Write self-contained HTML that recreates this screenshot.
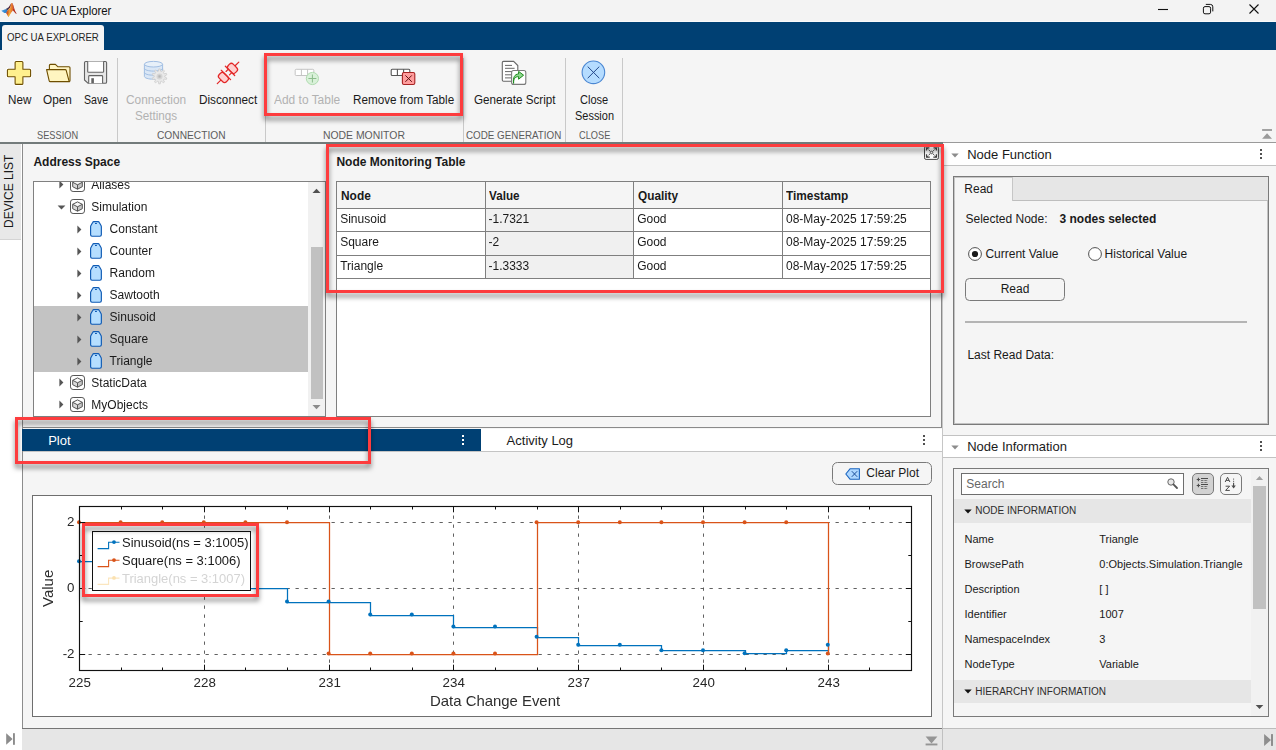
<!DOCTYPE html>
<html>
<head>
<meta charset="utf-8">
<title>OPC UA Explorer</title>
<style>
*{box-sizing:border-box;margin:0;padding:0}
html,body{width:1276px;height:750px;overflow:hidden;background:#f5f5f5;font-family:"Liberation Sans",sans-serif;font-size:12px;color:#1a1a1a}
#root{position:relative;width:1276px;height:750px;overflow:hidden;background:#f5f5f5}
.abs{position:absolute}
.t{position:absolute;white-space:nowrap}
.gl{will-change:transform;pointer-events:none}
svg{position:absolute;overflow:visible}
.redbox{position:absolute;border:3px solid #fd3c3e;filter:drop-shadow(0px 4px 2.5px rgba(0,0,0,.5))}
</style>
</head>
<body>
<div id="root">
<div class="abs" style="left:0px;top:0px;width:1276px;height:22px;background:#f3f3f3;"></div>
<div class="abs" style="left:0px;top:21px;width:1276px;height:1px;background:#fafafa;"></div>
<div class="abs" style="left:0px;top:22px;width:1276px;height:28px;background:#004073;"></div>
<div class="abs" style="left:2px;top:25px;width:102px;height:25px;background:#f5f5f5;border-radius:3px 3px 0 0;"></div>
<svg style="left:0;top:0" width="20" height="20" viewBox="0 0 20 20">
<defs><linearGradient id="lg1" x1="0" y1="0" x2="1" y2="0"><stop offset="0" stop-color="#b8341a"/><stop offset=".5" stop-color="#f3a23a"/><stop offset="1" stop-color="#dc5a20"/></linearGradient>
<linearGradient id="lg2" x1="0" y1="1" x2="1" y2="0"><stop offset="0" stop-color="#24558f"/><stop offset=".55" stop-color="#5a2c3c"/><stop offset="1" stop-color="#a02a1c"/></linearGradient>
<linearGradient id="lg3" x1="0" y1="0" x2="1" y2="0"><stop offset="0" stop-color="#4aa3e6"/><stop offset="1" stop-color="#2477c4"/></linearGradient></defs>
<path d="M1.3 10.7L5.4 9.3L7.6 10.3L6.3 13L4.3 13.1Z" fill="url(#lg3)"/>
<path d="M5.4 9.3L6.6 8.4L8.6 7.3L10.4 4.4L11.3 3.1L10.4 7.6L7.6 10.3Z" fill="url(#lg2)"/>
<path d="M11.3 3.1Q11.7 2.7 12.2 3.2L13.1 5.5L13.4 8.6L12.7 10.8L10.7 13.2L8.5 17L7.3 15L6.1 13.1L7.6 10.3L10.4 7.6Z" fill="url(#lg1)"/>
<path d="M11.9 2.9Q12.5 2.9 12.9 3.9L13.9 7.2L15.1 11L16.8 14.1L15.6 13.6L14.1 11.8L13 10.4L12.7 10.8L13.3 8.4L12.9 5Z" fill="#b22e1c"/>
<path d="M8.5 17L7.6 15.6L9.6 12.6L10.8 13Z" fill="#f2b233" opacity=".8"/>
</svg>
<div class="t" style="left:23.20px;top:2px;font-size:13px;line-height:18px;color:#111;transform:scaleX(0.8740);transform-origin:0 0;">OPC UA Explorer</div>
<svg style="left:1150px;top:0" width="126" height="22" viewBox="0 0 126 22" fill="none" stroke="#111" stroke-width="1.1">
<path d="M8 9.5H18"/>
<rect x="53.4" y="6.6" width="7.2" height="7.2" rx="1.6" stroke-width="1"/><path d="M55.8 4.4H60.4Q62.8 4.4 62.8 6.8V11.4" stroke-width="1"/>
<path d="M99.5 4.5L108.5 13.5M108.5 4.5L99.5 13.5"/>
</svg>
<div class="t" style="left:7.30px;top:30px;font-size:11px;line-height:15px;color:#242424;transform:scaleX(0.8782);transform-origin:0 0;">OPC UA EXPLORER</div>
<div class="abs" style="left:0px;top:50px;width:1276px;height:92px;background:#f5f5f5;"></div>
<div class="abs" style="left:0px;top:142px;width:1276px;height:1px;background:#8e8e8e;"></div>
<div class="abs" style="left:117px;top:58px;width:1px;height:84px;background:#c9c9c9;"></div>
<div class="abs" style="left:265px;top:58px;width:1px;height:84px;background:#c9c9c9;"></div>
<div class="abs" style="left:463px;top:58px;width:1px;height:84px;background:#c9c9c9;"></div>
<div class="abs" style="left:565px;top:58px;width:1px;height:84px;background:#c9c9c9;"></div>
<div class="abs" style="left:622px;top:58px;width:1px;height:84px;background:#c9c9c9;"></div>
<div class="t" style="left:7.60px;top:92px;font-size:12px;line-height:17px;color:#1a1a1a;transform:scaleX(0.9706);transform-origin:0 0;">New</div>
<div class="t" style="left:43.00px;top:92px;font-size:12px;line-height:17px;color:#1a1a1a;transform:scaleX(0.9811);transform-origin:0 0;">Open</div>
<div class="t" style="left:84.00px;top:92px;font-size:12px;line-height:17px;color:#1a1a1a;transform:scaleX(0.8848);transform-origin:0 0;">Save</div>
<div class="t" style="left:125.90px;top:92px;font-size:12px;line-height:17px;color:#b2b2b2;transform:scaleX(0.9916);transform-origin:0 0;">Connection</div>
<div class="t" style="left:135.00px;top:108px;font-size:12px;line-height:17px;color:#b2b2b2;transform:scaleX(0.9733);transform-origin:0 0;">Settings</div>
<div class="t" style="left:198.80px;top:92px;font-size:12px;line-height:17px;color:#1a1a1a;transform:scaleX(0.9804);transform-origin:0 0;">Disconnect</div>
<div class="t" style="left:274.00px;top:92px;font-size:12px;line-height:17px;color:#b2b2b2;transform:scaleX(0.9955);transform-origin:0 0;">Add to Table</div>
<div class="t" style="left:353.00px;top:92px;font-size:12px;line-height:17px;color:#1a1a1a;transform:scaleX(0.9747);transform-origin:0 0;">Remove from Table</div>
<div class="t" style="left:473.70px;top:92px;font-size:12px;line-height:17px;color:#1a1a1a;transform:scaleX(0.9698);transform-origin:0 0;">Generate Script</div>
<div class="t" style="left:579.90px;top:92px;font-size:12px;line-height:17px;color:#1a1a1a;transform:scaleX(0.9192);transform-origin:0 0;">Close</div>
<div class="t" style="left:574.50px;top:108px;font-size:12px;line-height:17px;color:#1a1a1a;transform:scaleX(0.9135);transform-origin:0 0;">Session</div>
<div class="t" style="left:37.10px;top:128px;font-size:11px;line-height:15px;color:#5c5c5c;transform:scaleX(0.8404);transform-origin:0 0;">SESSION</div>
<div class="t" style="left:156.70px;top:128px;font-size:11px;line-height:15px;color:#5c5c5c;transform:scaleX(0.9264);transform-origin:0 0;">CONNECTION</div>
<div class="t" style="left:323.10px;top:128px;font-size:11px;line-height:15px;color:#5c5c5c;transform:scaleX(0.9460);transform-origin:0 0;">NODE MONITOR</div>
<div class="t" style="left:466.30px;top:128px;font-size:11px;line-height:15px;color:#5c5c5c;transform:scaleX(0.8927);transform-origin:0 0;">CODE GENERATION</div>
<div class="t" style="left:578.50px;top:128px;font-size:11px;line-height:15px;color:#5c5c5c;transform:scaleX(0.8393);transform-origin:0 0;">CLOSE</div>
<svg style="left:1260px;top:127px" width="14" height="14" viewBox="0 0 14 14"><rect x="2.1" y="2.1" width="9.9" height="1.8" fill="#9a9a9a"/><path d="M7.05 6.2L12 11.7H2.1Z" fill="#9a9a9a"/></svg>
<svg style="left:0;top:50px" width="640" height="45" viewBox="0 50 640 45">
<g stroke-linejoin="round">
<path d="M16.1 61.5H21.9Q22.9 61.5 22.9 62.5V69.2H29.6Q30.6 69.2 30.6 70.2V75.7Q30.6 76.7 29.6 76.7H22.9V83.4Q22.9 84.4 21.9 84.4H16.1Q15.1 84.4 15.1 83.4V76.7H8.4Q7.4 76.7 7.4 75.7V70.2Q7.4 69.2 8.4 69.2H15.1V62.5Q15.1 61.5 16.1 61.5Z" fill="#fff08e" stroke="#ffffff" stroke-width="3" opacity=".9"/>
<path d="M16.1 61.5H21.9Q22.9 61.5 22.9 62.5V69.2H29.6Q30.6 69.2 30.6 70.2V75.7Q30.6 76.7 29.6 76.7H22.9V83.4Q22.9 84.4 21.9 84.4H16.1Q15.1 84.4 15.1 83.4V76.7H8.4Q7.4 76.7 7.4 75.7V70.2Q7.4 69.2 8.4 69.2H15.1V62.5Q15.1 61.5 16.1 61.5Z" fill="#fff08e" stroke="#6e4e00" stroke-width="1.1"/>
<!-- Open folder -->
<path d="M49.4 69.5V65.4Q49.4 64.4 50.4 64.4H55.4L58 66.8H69Q70 66.8 70 67.8V80.6Q70 81.6 69 81.6" fill="#fff5c4" stroke="#6e4e00" stroke-width="1.1"/>
<path d="M46.6 69.6H65.2Q66 69.6 66.2 70.4L69.2 81.6H50.2Q49.4 81.6 49.2 80.8Z" fill="#fff5c0" stroke="#6e4e00" stroke-width="1.1"/>
<!-- Save -->
<path d="M85.8 61.5H105.3Q106.6 61.5 106.6 62.8V82Q106.6 83.3 105.3 83.3H88.2L84.5 80V62.8Q84.5 61.5 85.8 61.5Z" fill="#e6e6e6" stroke="#636363" stroke-width="1.1"/>
<path d="M87.7 61.5V71.4Q87.7 72.2 88.5 72.2H102.8Q103.6 72.2 103.6 71.4V61.5" fill="#fff" stroke="#636363" stroke-width="1.1"/>
<path d="M88.7 83.3V76.4Q88.7 75.6 89.5 75.6H101.8Q102.6 75.6 102.6 76.4V83.3" fill="#fff" stroke="#636363" stroke-width="1.1"/>
<rect x="91.3" y="78.2" width="2.6" height="5" fill="#636363"/>
</g>
<!-- Connection settings (disabled) -->
<g opacity=".7">
<path d="M144.4 64.2V76.4C144.4 78 148.5 79.2 153.5 79.2C158.5 79.2 162.6 78 162.6 76.4V64.2" fill="#cfe2f7" stroke="#7fa8dc" stroke-width="1"/>
<path d="M144.4 68.3C144.4 69.9 148.5 71.1 153.5 71.1C158.5 71.1 162.6 69.9 162.6 68.3M144.4 72.4C144.4 74 148.5 75.2 153.5 75.2C158.5 75.2 162.6 74 162.6 72.4" fill="none" stroke="#7fa8dc" stroke-width="1"/>
<ellipse cx="153.5" cy="64.2" rx="9.1" ry="2.8" fill="#e2eefb" stroke="#7fa8dc" stroke-width="1"/>
</g>
<g transform="translate(159.5 76.4)">
<path d="M-1.06 -5.19L-0.75 -7.46L0.75 -7.46L1.06 -5.19L2.20 -4.82L3.78 -6.48L5.00 -5.59L3.91 -3.58L4.61 -2.61L6.86 -3.02L7.33 -1.59L5.27 -0.60L5.27 0.60L7.33 1.59L6.86 3.02L4.61 2.61L3.91 3.58L5.00 5.59L3.78 6.48L2.20 4.82L1.06 5.19L0.75 7.46L-0.75 7.46L-1.06 5.19L-2.20 4.82L-3.78 6.48L-5.00 5.59L-3.91 3.58L-4.61 2.61L-6.86 3.02L-7.33 1.59L-5.27 0.60L-5.27 -0.60L-7.33 -1.59L-6.86 -3.02L-4.61 -2.61L-3.91 -3.58L-5.00 -5.59L-3.78 -6.48L-2.20 -4.82Z" fill="#e9e9e9" stroke="#cdcdcd" stroke-width=".8" stroke-linejoin="round"/>
<circle r="3" fill="#d6d6d6"/><circle r="1.7" fill="#c4c4c4"/><circle r=".8" fill="#b6b6b6"/>
</g>
<!-- Disconnect plug -->
<g transform="translate(227.9 73) rotate(-45)" stroke="#e32828" stroke-width="1.25" fill="#ffd0d0" stroke-linecap="round">
<path d="M-15 0H-10M10.2 0H15.4M3 -2.4H-0.2M3 2.4H-0.2" fill="none"/>
<rect x="-9.8" y="-5.1" width="7" height="10.2" rx="2.6"/>
<rect x="3" y="-5.1" width="7" height="10.2" rx="2.6"/>
<path d="M-2.8 -6.6V6.6M3 -6.6V6.6" fill="none"/>
</g>
<!-- Add to table (disabled) -->
<g>
<rect x="295.2" y="69.3" width="18.6" height="6.2" rx="1" fill="#fff" stroke="#c4c4c4" stroke-width="1"/>
<path d="M301.4 69.3V75.5M307.6 69.3V75.5" stroke="#c4c4c4" stroke-width="1"/>
<circle cx="312.4" cy="78.5" r="6.1" fill="#d9f1d9" stroke="#b0dcb0" stroke-width="1"/>
<path d="M308.4 78.5H316.4M312.4 74.5V82.5" stroke="#8cbc8c" stroke-width="1"/>
</g>
<!-- Remove from table -->
<g>
<rect x="391.2" y="69.3" width="18.6" height="6.2" rx="1" fill="#fff" stroke="#555" stroke-width="1.1"/>
<path d="M397.4 69.3V75.5M403.6 69.3V75.5" stroke="#555" stroke-width="1.1"/>
<rect x="402.4" y="72.5" width="12.4" height="12" rx="1.6" fill="#ff9c9c" stroke="#a52222" stroke-width="1.1"/>
<path d="M405.4 75.4L411.8 81.8M411.8 75.4L405.4 81.8" stroke="#5e1212" stroke-width="1"/>
</g>
<!-- Generate script -->
<g>
<path d="M503.5 61.4H513.6L517.8 65.6V80Q517.8 81.2 516.6 81.2H503.5Q502.3 81.2 502.3 80V62.6Q502.3 61.4 503.5 61.4Z" fill="#fff" stroke="#686868" stroke-width="1.1"/>
<path d="M505 65.4H512M505 68.3H514.6M505 71.6H514.6M505 74.8H511M505 77.9H511" stroke="#686868" stroke-width="1"/>
<rect x="511.6" y="70.5" width="14.2" height="13.9" rx="2" fill="#fff" stroke="#7a7a7a" stroke-width="1.1"/>
<path d="M513.6 83.4C513.4 79 515 76.6 518.6 76.6V79.2L523.6 75.2L518.6 71.4V74C514.6 74 512.8 77.6 513.6 83.4Z" fill="#8fd88f" stroke="#1c8a1c" stroke-width="1" stroke-linejoin="round"/>
</g>
<!-- Close session -->
<circle cx="593.4" cy="72.3" r="11.3" fill="#b5dcff" stroke="#4b87d2" stroke-width="1.1"/>
<path d="M587.7 66.6L599.3 78.2M599.3 66.6L587.7 78.2" stroke="#23488a" stroke-width="1"/>
</svg>
<div class="abs" style="left:0px;top:143px;width:22px;height:584px;background:#ffffff;"></div>
<div class="abs" style="left:0px;top:143px;width:21px;height:96px;background:#e8e8e8;"></div>
<div class="abs" style="left:0px;top:239px;width:21px;height:1px;background:#d4d4d4;"></div>
<div class="abs" style="left:22px;top:143px;width:1px;height:585px;background:#8c8c8c;"></div>
<div class="t" style="left:2.2px;top:228px;font-size:12px;line-height:14px;color:#1a1a1a;transform:rotate(-90deg);transform-origin:0 0;">DEVICE LIST</div>
<div class="abs" style="left:23px;top:143px;width:305px;height:285px;background:#f5f5f5;"></div>
<div class="t" style="left:33.40px;top:154px;font-size:12px;line-height:17px;color:#1a1a1a;font-weight:bold;">Address Space</div>
<div class="abs" style="left:33px;top:181px;width:293px;height:236px;background:#fff;border:1px solid #808080;"></div>
<div class="abs" style="left:34px;top:306px;width:274px;height:66px;background:#c3c3c3;"></div>
<div class="abs" style="left:308px;top:182px;width:17px;height:234px;background:#f1f1f1;"></div>
<div class="abs" style="left:310.5px;top:247px;width:12.5px;height:152px;background:#c1c1c1;"></div>
<svg style="left:312px;top:188px" width="9" height="6" viewBox="0 0 9 6"><path d="M0.5 5L4.5 0.8L8.5 5Z" fill="#505050"/></svg>
<svg style="left:312px;top:404px" width="9" height="6" viewBox="0 0 9 6"><path d="M0.5 1L4.5 5.2L8.5 1Z" fill="#8a8a8a"/></svg>
<div class="abs gl" style="left:34px;top:182px;width:274px;height:234px;overflow:hidden">
<svg style="left:25.299999999999997px;top:-2.2px" width="5" height="9" viewBox="0 0 5 9"><path d="M0.4 0.6L4.4 4.5L0.4 8.4Z" fill="#555"/></svg>
<svg style="left:36px;top:-5.2px" width="15" height="15" viewBox="0 0 15 15"><rect x=".5" y=".5" width="14" height="14" rx="2.6" fill="#fff" stroke="#555" stroke-width="1"/><path d="M7.5 2.9L12.3 5.3L7.5 7.8L2.7 5.3Z" fill="#f8f8f8"/><path d="M2.7 5.3L7.5 7.8V12.2L2.7 9.7Z" fill="#dadada"/><path d="M12.3 5.3L7.5 7.8V12.2L12.3 9.7Z" fill="#c6c6c6"/><path d="M7.5 2.9L12.3 5.3V9.7L7.5 12.2L2.7 9.7V5.3ZM2.7 5.3L7.5 7.8L12.3 5.3M7.5 7.8V12.2" fill="none" stroke="#555" stroke-width="1" stroke-linejoin="round"/></svg>
<div class="t" style="left:57.30px;top:-5px;font-size:12px;line-height:17px;color:#1a1a1a;">Aliases</div>
<svg style="left:23.299999999999997px;top:22.9px" width="9" height="5" viewBox="0 0 9 5"><path d="M0.6 0.4H8.4L4.5 4.6Z" fill="#555"/></svg>
<svg style="left:36px;top:17.0px" width="15" height="15" viewBox="0 0 15 15"><rect x=".5" y=".5" width="14" height="14" rx="2.6" fill="#fff" stroke="#555" stroke-width="1"/><path d="M7.5 2.9L12.3 5.3L7.5 7.8L2.7 5.3Z" fill="#f8f8f8"/><path d="M2.7 5.3L7.5 7.8V12.2L2.7 9.7Z" fill="#dadada"/><path d="M12.3 5.3L7.5 7.8V12.2L12.3 9.7Z" fill="#c6c6c6"/><path d="M7.5 2.9L12.3 5.3V9.7L7.5 12.2L2.7 9.7V5.3ZM2.7 5.3L7.5 7.8L12.3 5.3M7.5 7.8V12.2" fill="none" stroke="#555" stroke-width="1" stroke-linejoin="round"/></svg>
<div class="t" style="left:57.30px;top:17px;font-size:12px;line-height:17px;color:#1a1a1a;">Simulation</div>
<svg style="left:43.2px;top:42.5px" width="5" height="9" viewBox="0 0 5 9"><path d="M0.4 0.6L4.4 4.5L0.4 8.4Z" fill="#555"/></svg>
<svg style="left:56px;top:39.0px" width="13" height="16" viewBox="0 0 13 16"><path d="M2 15.2H9.95Q11.35 15.2 11.35 13.8V6.1Q11.35 5.3 11 4.6L9.3 1.4Q8.9 0.6 8.1 0.6H3.85Q3.05 0.6 2.65 1.4L0.95 4.6Q0.6 5.3 0.6 6.1V13.8Q0.6 15.2 2 15.2Z" fill="#b5deff" stroke="#0f5ab4" stroke-width="1.15" stroke-linejoin="round"/><path d="M5 2.5H6.9" stroke="#0f5ab4" stroke-width="1.1"/></svg>
<div class="t" style="left:75.60px;top:39px;font-size:12px;line-height:17px;color:#1a1a1a;">Constant</div>
<svg style="left:43.2px;top:64.5px" width="5" height="9" viewBox="0 0 5 9"><path d="M0.4 0.6L4.4 4.5L0.4 8.4Z" fill="#555"/></svg>
<svg style="left:56px;top:61.0px" width="13" height="16" viewBox="0 0 13 16"><path d="M2 15.2H9.95Q11.35 15.2 11.35 13.8V6.1Q11.35 5.3 11 4.6L9.3 1.4Q8.9 0.6 8.1 0.6H3.85Q3.05 0.6 2.65 1.4L0.95 4.6Q0.6 5.3 0.6 6.1V13.8Q0.6 15.2 2 15.2Z" fill="#b5deff" stroke="#0f5ab4" stroke-width="1.15" stroke-linejoin="round"/><path d="M5 2.5H6.9" stroke="#0f5ab4" stroke-width="1.1"/></svg>
<div class="t" style="left:75.60px;top:61px;font-size:12px;line-height:17px;color:#1a1a1a;">Counter</div>
<svg style="left:43.2px;top:86.5px" width="5" height="9" viewBox="0 0 5 9"><path d="M0.4 0.6L4.4 4.5L0.4 8.4Z" fill="#555"/></svg>
<svg style="left:56px;top:83.0px" width="13" height="16" viewBox="0 0 13 16"><path d="M2 15.2H9.95Q11.35 15.2 11.35 13.8V6.1Q11.35 5.3 11 4.6L9.3 1.4Q8.9 0.6 8.1 0.6H3.85Q3.05 0.6 2.65 1.4L0.95 4.6Q0.6 5.3 0.6 6.1V13.8Q0.6 15.2 2 15.2Z" fill="#b5deff" stroke="#0f5ab4" stroke-width="1.15" stroke-linejoin="round"/><path d="M5 2.5H6.9" stroke="#0f5ab4" stroke-width="1.1"/></svg>
<div class="t" style="left:75.60px;top:83px;font-size:12px;line-height:17px;color:#1a1a1a;">Random</div>
<svg style="left:43.2px;top:108.5px" width="5" height="9" viewBox="0 0 5 9"><path d="M0.4 0.6L4.4 4.5L0.4 8.4Z" fill="#555"/></svg>
<svg style="left:56px;top:105.0px" width="13" height="16" viewBox="0 0 13 16"><path d="M2 15.2H9.95Q11.35 15.2 11.35 13.8V6.1Q11.35 5.3 11 4.6L9.3 1.4Q8.9 0.6 8.1 0.6H3.85Q3.05 0.6 2.65 1.4L0.95 4.6Q0.6 5.3 0.6 6.1V13.8Q0.6 15.2 2 15.2Z" fill="#b5deff" stroke="#0f5ab4" stroke-width="1.15" stroke-linejoin="round"/><path d="M5 2.5H6.9" stroke="#0f5ab4" stroke-width="1.1"/></svg>
<div class="t" style="left:75.60px;top:105px;font-size:12px;line-height:17px;color:#1a1a1a;">Sawtooth</div>
<svg style="left:43.2px;top:130.5px" width="5" height="9" viewBox="0 0 5 9"><path d="M0.4 0.6L4.4 4.5L0.4 8.4Z" fill="#555"/></svg>
<svg style="left:56px;top:127.0px" width="13" height="16" viewBox="0 0 13 16"><path d="M2 15.2H9.95Q11.35 15.2 11.35 13.8V6.1Q11.35 5.3 11 4.6L9.3 1.4Q8.9 0.6 8.1 0.6H3.85Q3.05 0.6 2.65 1.4L0.95 4.6Q0.6 5.3 0.6 6.1V13.8Q0.6 15.2 2 15.2Z" fill="#b5deff" stroke="#0f5ab4" stroke-width="1.15" stroke-linejoin="round"/><path d="M5 2.5H6.9" stroke="#0f5ab4" stroke-width="1.1"/></svg>
<div class="t" style="left:75.60px;top:127px;font-size:12px;line-height:17px;color:#1a1a1a;">Sinusoid</div>
<svg style="left:43.2px;top:152.5px" width="5" height="9" viewBox="0 0 5 9"><path d="M0.4 0.6L4.4 4.5L0.4 8.4Z" fill="#555"/></svg>
<svg style="left:56px;top:149.0px" width="13" height="16" viewBox="0 0 13 16"><path d="M2 15.2H9.95Q11.35 15.2 11.35 13.8V6.1Q11.35 5.3 11 4.6L9.3 1.4Q8.9 0.6 8.1 0.6H3.85Q3.05 0.6 2.65 1.4L0.95 4.6Q0.6 5.3 0.6 6.1V13.8Q0.6 15.2 2 15.2Z" fill="#b5deff" stroke="#0f5ab4" stroke-width="1.15" stroke-linejoin="round"/><path d="M5 2.5H6.9" stroke="#0f5ab4" stroke-width="1.1"/></svg>
<div class="t" style="left:75.60px;top:149px;font-size:12px;line-height:17px;color:#1a1a1a;">Square</div>
<svg style="left:43.2px;top:174.5px" width="5" height="9" viewBox="0 0 5 9"><path d="M0.4 0.6L4.4 4.5L0.4 8.4Z" fill="#555"/></svg>
<svg style="left:56px;top:171.0px" width="13" height="16" viewBox="0 0 13 16"><path d="M2 15.2H9.95Q11.35 15.2 11.35 13.8V6.1Q11.35 5.3 11 4.6L9.3 1.4Q8.9 0.6 8.1 0.6H3.85Q3.05 0.6 2.65 1.4L0.95 4.6Q0.6 5.3 0.6 6.1V13.8Q0.6 15.2 2 15.2Z" fill="#b5deff" stroke="#0f5ab4" stroke-width="1.15" stroke-linejoin="round"/><path d="M5 2.5H6.9" stroke="#0f5ab4" stroke-width="1.1"/></svg>
<div class="t" style="left:75.60px;top:171px;font-size:12px;line-height:17px;color:#1a1a1a;">Triangle</div>
<svg style="left:25.299999999999997px;top:196.0px" width="5" height="9" viewBox="0 0 5 9"><path d="M0.4 0.6L4.4 4.5L0.4 8.4Z" fill="#555"/></svg>
<svg style="left:36px;top:193.0px" width="15" height="15" viewBox="0 0 15 15"><rect x=".5" y=".5" width="14" height="14" rx="2.6" fill="#fff" stroke="#555" stroke-width="1"/><path d="M7.5 2.9L12.3 5.3L7.5 7.8L2.7 5.3Z" fill="#f8f8f8"/><path d="M2.7 5.3L7.5 7.8V12.2L2.7 9.7Z" fill="#dadada"/><path d="M12.3 5.3L7.5 7.8V12.2L12.3 9.7Z" fill="#c6c6c6"/><path d="M7.5 2.9L12.3 5.3V9.7L7.5 12.2L2.7 9.7V5.3ZM2.7 5.3L7.5 7.8L12.3 5.3M7.5 7.8V12.2" fill="none" stroke="#555" stroke-width="1" stroke-linejoin="round"/></svg>
<div class="t" style="left:57.30px;top:193px;font-size:12px;line-height:17px;color:#1a1a1a;">StaticData</div>
<svg style="left:25.299999999999997px;top:218.0px" width="5" height="9" viewBox="0 0 5 9"><path d="M0.4 0.6L4.4 4.5L0.4 8.4Z" fill="#555"/></svg>
<svg style="left:36px;top:215.0px" width="15" height="15" viewBox="0 0 15 15"><rect x=".5" y=".5" width="14" height="14" rx="2.6" fill="#fff" stroke="#555" stroke-width="1"/><path d="M7.5 2.9L12.3 5.3L7.5 7.8L2.7 5.3Z" fill="#f8f8f8"/><path d="M2.7 5.3L7.5 7.8V12.2L2.7 9.7Z" fill="#dadada"/><path d="M12.3 5.3L7.5 7.8V12.2L12.3 9.7Z" fill="#c6c6c6"/><path d="M7.5 2.9L12.3 5.3V9.7L7.5 12.2L2.7 9.7V5.3ZM2.7 5.3L7.5 7.8L12.3 5.3M7.5 7.8V12.2" fill="none" stroke="#555" stroke-width="1" stroke-linejoin="round"/></svg>
<div class="t" style="left:57.30px;top:215px;font-size:12px;line-height:17px;color:#1a1a1a;">MyObjects</div>
</div>
<div class="abs" style="left:328px;top:143px;width:614px;height:285px;background:#f5f5f5;"></div>
<div class="t" style="left:336.40px;top:154px;font-size:12px;line-height:17px;color:#1a1a1a;font-weight:bold;">Node Monitoring Table</div>
<div class="abs" style="left:336px;top:181px;width:595px;height:236px;background:#fff;border:1px solid #7f7f7f;"></div>
<div class="abs" style="left:337px;top:182px;width:593px;height:26px;background:#f5f5f5;"></div>
<div class="abs" style="left:485px;top:208px;width:148px;height:70px;background:#f0f0f0;"></div>
<div class="abs" style="left:337px;top:208px;width:593px;height:1px;background:#7f7f7f;"></div>
<div class="abs" style="left:337px;top:231.3px;width:593px;height:1px;background:#7f7f7f;"></div>
<div class="abs" style="left:337px;top:254.8px;width:593px;height:1px;background:#7f7f7f;"></div>
<div class="abs" style="left:337px;top:278px;width:593px;height:1px;background:#7f7f7f;"></div>
<div class="abs" style="left:484.5px;top:182px;width:1px;height:97px;background:#7f7f7f;"></div>
<div class="abs" style="left:633px;top:182px;width:1px;height:97px;background:#7f7f7f;"></div>
<div class="abs" style="left:781.5px;top:182px;width:1px;height:97px;background:#7f7f7f;"></div>
<div class="t" style="left:340.70px;top:188px;font-size:12px;line-height:17px;color:#1a1a1a;font-weight:bold;transform:scaleX(0.9933);transform-origin:0 0;">Node</div>
<div class="t" style="left:488.60px;top:188px;font-size:12px;line-height:17px;color:#1a1a1a;font-weight:bold;transform:scaleX(0.9728);transform-origin:0 0;">Value</div>
<div class="t" style="left:637.60px;top:188px;font-size:12px;line-height:17px;color:#1a1a1a;font-weight:bold;transform:scaleX(0.9858);transform-origin:0 0;">Quality</div>
<div class="t" style="left:786.00px;top:188px;font-size:12px;line-height:17px;color:#1a1a1a;font-weight:bold;transform:scaleX(0.9868);transform-origin:0 0;">Timestamp</div>
<div class="abs gl" style="left:0;top:0;width:1276px;height:750px">
<div class="t" style="left:340.20px;top:211px;font-size:12px;line-height:17px;color:#1a1a1a;">Sinusoid</div>
<div class="t" style="left:488.50px;top:211px;font-size:12px;line-height:17px;color:#1a1a1a;">-1.7321</div>
<div class="t" style="left:637.20px;top:211px;font-size:12px;line-height:17px;color:#1a1a1a;">Good</div>
<div class="t" style="left:786.00px;top:211px;font-size:12px;line-height:17px;color:#1a1a1a;">08-May-2025 17:59:25</div>
<div class="t" style="left:340.20px;top:234px;font-size:12px;line-height:17px;color:#1a1a1a;">Square</div>
<div class="t" style="left:488.50px;top:234px;font-size:12px;line-height:17px;color:#1a1a1a;">-2</div>
<div class="t" style="left:637.20px;top:234px;font-size:12px;line-height:17px;color:#1a1a1a;">Good</div>
<div class="t" style="left:786.00px;top:234px;font-size:12px;line-height:17px;color:#1a1a1a;">08-May-2025 17:59:25</div>
<div class="t" style="left:340.20px;top:258px;font-size:12px;line-height:17px;color:#1a1a1a;">Triangle</div>
<div class="t" style="left:488.50px;top:258px;font-size:12px;line-height:17px;color:#1a1a1a;">-1.3333</div>
<div class="t" style="left:637.20px;top:258px;font-size:12px;line-height:17px;color:#1a1a1a;">Good</div>
<div class="t" style="left:786.00px;top:258px;font-size:12px;line-height:17px;color:#1a1a1a;">08-May-2025 17:59:25</div>
</div>
<svg style="left:924px;top:146px" width="15" height="14" viewBox="0 0 15 14"><rect x=".5" y=".5" width="13.9" height="12.9" rx="1.6" fill="#fff" stroke="#484848" stroke-width="1"/><path d="M2.5 4.6V1.9H5.4M2.5 8.3V11.2H5.8M9.3 11.2H12.4V8.3M9.5 1.9H12.4V4.6" fill="none" stroke="#444" stroke-width="1.25"/><path d="M2.5 3.6V1.9H4.4ZM2.5 9.4V11.2H4.6ZM10.4 11.2H12.4V9.4ZM10.6 1.9H12.4V3.6Z" fill="#444"/><path d="M3.4 2.8L6.5 5.5M11.5 2.8L8.5 5.5M3.4 10.3L6.5 7.4M11.5 10.3L8.5 7.4" stroke="#444" stroke-width="1" stroke-dasharray="1.4 .8"/><circle cx="7.5" cy="6.45" r="1.25" fill="#fff" stroke="#484848" stroke-width=".9"/></svg>
<div class="abs" style="left:23px;top:427px;width:919px;height:1px;background:#8a8a8a;"></div>
<div class="abs" style="left:942px;top:143px;width:1px;height:585px;background:#c6c6c6;"></div>
<div class="abs" style="left:941px;top:143px;width:1px;height:285px;background:#8a8a8a;"></div>
<div class="abs" style="left:943px;top:143px;width:333px;height:585px;background:#f5f5f5;"></div>
<div class="abs" style="left:943px;top:143px;width:333px;height:22px;background:#fff;"></div>
<div class="abs" style="left:943px;top:165px;width:333px;height:1px;background:#c2c2c2;"></div>
<svg style="left:951px;top:152.6px" width="8" height="5" viewBox="0 0 8 5"><path d="M0.3 0.4H7.7L4 4.6Z" fill="#8c8c8c"/></svg>
<div class="t" style="left:967.20px;top:146px;font-size:13px;line-height:18px;color:#1a1a1a;">Node Function</div>
<svg style="left:1260px;top:149px" width="2" height="10" viewBox="0 0 2 10" shape-rendering="crispEdges"><rect x="0" y="0" width="2" height="2" fill="#505050"/><rect x="0" y="4" width="2" height="2" fill="#505050"/><rect x="0" y="8" width="2" height="2" fill="#505050"/></svg>
<div class="abs" style="left:953px;top:176px;width:316px;height:249px;background:#f5f5f5;border:1px solid #7a7a7a;box-shadow:inset 0 0 0 1px #c2c2c2;"></div>
<div class="abs" style="left:954px;top:177px;width:313.5px;height:23px;background:#e6e6e6;"></div>
<div class="abs" style="left:954px;top:200px;width:313.5px;height:1px;background:#bebebe;"></div>
<div class="abs" style="left:954px;top:177px;width:58.5px;height:24px;background:#f5f5f5;border:1px solid #c6c6c6;border-bottom:none;"></div>
<div class="t" style="left:964.30px;top:181px;font-size:12px;line-height:17px;color:#1a1a1a;">Read</div>
<div class="t" style="left:965.50px;top:211px;font-size:12px;line-height:17px;color:#1a1a1a;">Selected Node:</div>
<div class="t" style="left:1059.50px;top:211px;font-size:12px;line-height:17px;color:#1a1a1a;font-weight:bold;">3 nodes selected</div>
<svg style="left:968px;top:247px" width="14" height="14" viewBox="0 0 14 14"><circle cx="7" cy="7" r="6.4" fill="#fff" stroke="#505050" stroke-width="1"/><circle cx="7" cy="7" r="3.1" fill="#1a1a1a"/></svg>
<svg style="left:1087.7px;top:247px" width="14" height="14" viewBox="0 0 14 14"><circle cx="7" cy="7" r="6.4" fill="#fff" stroke="#505050" stroke-width="1"/></svg>
<div class="t" style="left:985.40px;top:246px;font-size:12px;line-height:17px;color:#1a1a1a;">Current Value</div>
<div class="t" style="left:1104.60px;top:246px;font-size:12px;line-height:17px;color:#1a1a1a;">Historical Value</div>
<div class="abs" style="left:965px;top:278px;width:100px;height:22.5px;background:#f5f5f5;border:1px solid #7a7a7a;border-radius:4.5px;"></div>
<div class="t" style="left:1000.66px;top:281px;font-size:12px;line-height:17px;color:#1a1a1a;">Read</div>
<div class="abs" style="left:965px;top:321px;width:282px;height:1.5px;background:#b4b4b4;"></div>
<div class="t" style="left:967.40px;top:347px;font-size:12px;line-height:17px;color:#1a1a1a;">Last Read Data:</div>
<div class="abs" style="left:943px;top:435px;width:333px;height:1px;background:#c2c2c2;"></div>
<div class="abs" style="left:943px;top:436px;width:333px;height:21px;background:#fff;"></div>
<div class="abs" style="left:943px;top:457px;width:333px;height:1px;background:#c2c2c2;"></div>
<svg style="left:951px;top:444.6px" width="8" height="5" viewBox="0 0 8 5"><path d="M0.3 0.4H7.7L4 4.6Z" fill="#8c8c8c"/></svg>
<div class="t" style="left:967.20px;top:438px;font-size:13px;line-height:18px;color:#1a1a1a;">Node Information</div>
<svg style="left:1260px;top:441px" width="2" height="10" viewBox="0 0 2 10" shape-rendering="crispEdges"><rect x="0" y="0" width="2" height="2" fill="#505050"/><rect x="0" y="4" width="2" height="2" fill="#505050"/><rect x="0" y="8" width="2" height="2" fill="#505050"/></svg>
<div class="abs" style="left:953px;top:468px;width:316px;height:249px;background:#f5f5f5;border:1px solid #7a7a7a;"></div>
<div class="abs" style="left:961px;top:473px;width:222.5px;height:22px;background:#fff;border:1px solid #6e6e6e;"></div>
<div class="t" style="left:966.30px;top:476px;font-size:12px;line-height:17px;color:#666;">Search</div>
<svg style="left:1166px;top:477px" width="13" height="13" viewBox="0 0 13 13"><circle cx="5" cy="5" r="3.2" fill="#e8e8e8" stroke="#6a6a6a" stroke-width="1"/><path d="M7.4 7.4L11 11" stroke="#555" stroke-width="1.8" stroke-linecap="round"/></svg>
<div class="abs" style="left:1192px;top:473px;width:22px;height:22px;background:#d2d2d2;border:1px solid #7a7a7a;border-radius:5px;"></div>
<div class="abs" style="left:1220px;top:473px;width:22px;height:22px;background:#f5f5f5;border:1px solid #7a7a7a;border-radius:5px;"></div>
<svg style="left:1192px;top:473px" width="22" height="22" viewBox="0 0 22 22" stroke="#4a4a4a" stroke-width="1" fill="none"><path d="M9 5.5H16M9 11.5H16"/><path d="M9 7.5H16M9 9.5H16M9 13.5H16M9 15.5H16" stroke-dasharray="2.4 1" stroke="#6a6a6a" stroke-width=".9"/><path d="M6.4 4.8V8.2M4.7 6.5H8.1M6.4 10.8V14.2M4.7 12.5H8.1" stroke-width="1.1"/></svg>
<svg style="left:1220px;top:473px" width="22" height="22" viewBox="0 0 22 22" stroke="#4a4a4a" stroke-width="1" fill="none"><path d="M5.2 9L7.55 4.3L9.9 9M6.1 7.4H9" stroke-width="1"/><path d="M5.6 13.2H9.6L5.6 17.4H9.8" stroke-width="1"/><path d="M13.6 5.6V6.6M13.6 7.8V8.8" stroke-width="1"/><path d="M13.6 9.8V14.4" stroke-width="1.1"/><path d="M11.4 12.4H15.8L13.6 15.4Z" fill="#4a4a4a" stroke="none"/></svg>
<div class="abs" style="left:1251px;top:469px;width:17px;height:247px;background:#f1f1f1;"></div>
<div class="abs" style="left:1253px;top:486.2px;width:12.8px;height:122.8px;background:#c1c1c1;"></div>
<svg style="left:1255px;top:475px" width="9" height="6" viewBox="0 0 9 6"><path d="M0.9 5L4.5 1L8.1 5Z" fill="#a0a0a0"/></svg>
<svg style="left:1255px;top:704px" width="9" height="6" viewBox="0 0 9 6"><path d="M0.7 1L4.5 5.1L8.3 1Z" fill="#505050"/></svg>
<div class="abs" style="left:954px;top:499.2px;width:297px;height:23.5px;background:#e6e6e6;"></div>
<svg style="left:963.6px;top:508.5px" width="8" height="5" viewBox="0 0 8 5"><path d="M0.3 0.4H7.7L4 4.6Z" fill="#111"/></svg>
<div class="t" style="left:975.30px;top:504px;font-size:10px;line-height:14px;color:#2c2c2c;">NODE INFORMATION</div>
<div class="abs" style="left:954px;top:680.3px;width:297px;height:23.2px;background:#e6e6e6;"></div>
<svg style="left:963.6px;top:689px" width="8" height="5" viewBox="0 0 8 5"><path d="M0.3 0.4H7.7L4 4.6Z" fill="#111"/></svg>
<div class="t" style="left:975.30px;top:685px;font-size:10px;line-height:14px;color:#2c2c2c;">HIERARCHY INFORMATION</div>
<div class="t" style="left:964.50px;top:532px;font-size:11px;line-height:15px;color:#1a1a1a;">Name</div>
<div class="t" style="left:1099.30px;top:532px;font-size:11px;line-height:15px;color:#1a1a1a;">Triangle</div>
<div class="t" style="left:964.50px;top:557px;font-size:11px;line-height:15px;color:#1a1a1a;">BrowsePath</div>
<div class="t" style="left:1099.30px;top:557px;font-size:11px;line-height:15px;color:#1a1a1a;">0:Objects.Simulation.Triangle</div>
<div class="t" style="left:964.50px;top:582px;font-size:11px;line-height:15px;color:#1a1a1a;">Description</div>
<div class="t" style="left:1099.30px;top:582px;font-size:11px;line-height:15px;color:#1a1a1a;">[ ]</div>
<div class="t" style="left:964.50px;top:607px;font-size:11px;line-height:15px;color:#1a1a1a;">Identifier</div>
<div class="t" style="left:1099.30px;top:607px;font-size:11px;line-height:15px;color:#1a1a1a;">1007</div>
<div class="t" style="left:964.50px;top:632px;font-size:11px;line-height:15px;color:#1a1a1a;">NamespaceIndex</div>
<div class="t" style="left:1099.30px;top:632px;font-size:11px;line-height:15px;color:#1a1a1a;">3</div>
<div class="t" style="left:964.50px;top:657px;font-size:11px;line-height:15px;color:#1a1a1a;">NodeType</div>
<div class="t" style="left:1099.30px;top:657px;font-size:11px;line-height:15px;color:#1a1a1a;">Variable</div>
<div class="abs" style="left:0px;top:727px;width:22px;height:23px;background:#fff;"></div>
<div class="abs" style="left:22px;top:728px;width:1254px;height:22px;background:#e6e6e6;"></div>
<div class="abs" style="left:22px;top:728px;width:921px;height:1px;background:#767676;"></div>
<div class="abs" style="left:943px;top:728px;width:333px;height:1px;background:#bcbcbc;"></div>
<div class="abs" style="left:942px;top:728px;width:1px;height:22px;background:#c0c0c0;"></div>
<svg style="left:6px;top:733px" width="10" height="12" viewBox="0 0 10 12"><path d="M0.2 0.2L6.6 6L0.2 11.8Z" fill="#8c8c8c"/><rect x="7" y="0.2" width="1.9" height="11.6" fill="#8c8c8c"/></svg>
<svg style="left:1264px;top:734px" width="10" height="12" viewBox="0 0 10 12"><path d="M0.1 0.1L7 6L0.1 11.9Z" fill="#8e8e8e"/><rect x="7" y="0.1" width="2" height="11.8" fill="#8e8e8e"/></svg>
<svg style="left:925.4px;top:733.5px" width="13" height="12" viewBox="0 0 13 12"><path d="M0.6 2.6H12.4L6.5 9.6Z" fill="#959595"/><rect x="0.6" y="9.5" width="11.8" height="1.9" fill="#959595"/></svg>
<div class="abs" style="left:23px;top:428px;width:919px;height:300px;background:#f5f5f5;"></div>
<div class="abs" style="left:23px;top:428.5px;width:919px;height:22.5px;background:#fff;"></div>
<div class="abs" style="left:22.4px;top:429px;width:459px;height:22px;background:#004073;"></div>
<div class="abs" style="left:23px;top:451px;width:919px;height:1px;background:#c4c4c4;"></div>
<div class="t" style="left:48.20px;top:432px;font-size:13px;line-height:18px;color:#fff;">Plot</div>
<svg style="left:462px;top:435px" width="2" height="10" viewBox="0 0 2 10" shape-rendering="crispEdges"><rect x="0" y="0" width="2" height="2" fill="#fff"/><rect x="0" y="4" width="2" height="2" fill="#fff"/><rect x="0" y="8" width="2" height="2" fill="#fff"/></svg>
<div class="t" style="left:506.60px;top:432px;font-size:13px;line-height:18px;color:#1a1a1a;">Activity Log</div>
<svg style="left:923px;top:435px" width="2" height="10" viewBox="0 0 2 10" shape-rendering="crispEdges"><rect x="0" y="0" width="2" height="2" fill="#505050"/><rect x="0" y="4" width="2" height="2" fill="#505050"/><rect x="0" y="8" width="2" height="2" fill="#505050"/></svg>
<div class="abs" style="left:832px;top:461.5px;width:100px;height:23.6px;background:#f5f5f5;border:1px solid #7a7a7a;border-radius:5.5px;"></div>
<svg style="left:844.5px;top:467.5px" width="16" height="12" viewBox="0 0 16 12"><path d="M5 0.8H14.4V11.2H5L0.8 6Z" fill="#aed7ff" stroke="#1c66c0" stroke-width="1.1" stroke-linejoin="round"/><path d="M6.8 3.2L12.2 8.8M12.2 3.2L6.8 8.8" stroke="#1c4f9a" stroke-width="1"/></svg>
<div class="t" style="left:866.30px;top:465px;font-size:12px;line-height:17px;color:#1a1a1a;">Clear Plot</div>
<div class="abs" style="left:32px;top:495.3px;width:900px;height:222.2px;background:#fff;border:1px solid #6e6e6e;"></div>
<svg style="left:0;top:0" width="1276" height="750" viewBox="0 0 1276 750"><path d="M204.5 506.5V670.5 M329.5 506.5V670.5 M453.5 506.5V670.5 M578.5 506.5V670.5 M703.5 506.5V670.5 M828.5 506.5V670.5 M79.5 522.5H911.5 M79.5 588.5H911.5 M79.5 654.5H911.5" stroke="#585858" stroke-width="0.95" stroke-dasharray="3.3 5.7" fill="none"/><path d="M79.5 561.5H121.5H162.5V574.5H204.5H245.5V588.5H287.5V602.5H329.5H370.5V615.5H412.5H453.5V627.5H495.5H537.5V637.5H578.5V645.5H620.5H661.5V650.5H703.5H745.5V653.5H786.5V650.5H828.5V645.5" stroke="#0072bd" stroke-width="1.25" fill="none"/><path d="M79.5 522.5H121.5H162.5H204.5H245.5H287.5H329.5V654.5H370.5H412.5H453.5H495.5H537.5V522.5H578.5H620.5H661.5H703.5H745.5H786.5H828.5V654.5" stroke="#d95319" stroke-width="1.25" fill="none"/><circle cx="79.00" cy="561.23" r="2" fill="#0072bd"/><circle cx="120.60" cy="561.23" r="2" fill="#0072bd"/><circle cx="162.20" cy="574.26" r="2" fill="#0072bd"/><circle cx="203.80" cy="574.26" r="2" fill="#0072bd"/><circle cx="245.40" cy="587.90" r="2" fill="#0072bd"/><circle cx="287.00" cy="601.54" r="2" fill="#0072bd"/><circle cx="328.60" cy="601.54" r="2" fill="#0072bd"/><circle cx="370.20" cy="614.57" r="2" fill="#0072bd"/><circle cx="411.80" cy="614.57" r="2" fill="#0072bd"/><circle cx="453.40" cy="626.46" r="2" fill="#0072bd"/><circle cx="495.00" cy="626.46" r="2" fill="#0072bd"/><circle cx="536.60" cy="636.64" r="2" fill="#0072bd"/><circle cx="578.20" cy="644.71" r="2" fill="#0072bd"/><circle cx="619.80" cy="644.71" r="2" fill="#0072bd"/><circle cx="661.40" cy="650.29" r="2" fill="#0072bd"/><circle cx="703.00" cy="650.29" r="2" fill="#0072bd"/><circle cx="744.60" cy="653.14" r="2" fill="#0072bd"/><circle cx="786.20" cy="650.29" r="2" fill="#0072bd"/><circle cx="827.80" cy="644.71" r="2" fill="#0072bd"/><circle cx="79.00" cy="522.30" r="2" fill="#d95319"/><circle cx="120.60" cy="522.30" r="2" fill="#d95319"/><circle cx="162.20" cy="522.30" r="2" fill="#d95319"/><circle cx="203.80" cy="522.30" r="2" fill="#d95319"/><circle cx="245.40" cy="522.30" r="2" fill="#d95319"/><circle cx="287.00" cy="522.30" r="2" fill="#d95319"/><circle cx="328.60" cy="653.50" r="2" fill="#d95319"/><circle cx="370.20" cy="653.50" r="2" fill="#d95319"/><circle cx="411.80" cy="653.50" r="2" fill="#d95319"/><circle cx="453.40" cy="653.50" r="2" fill="#d95319"/><circle cx="495.00" cy="653.50" r="2" fill="#d95319"/><circle cx="536.60" cy="522.30" r="2" fill="#d95319"/><circle cx="578.20" cy="522.30" r="2" fill="#d95319"/><circle cx="619.80" cy="522.30" r="2" fill="#d95319"/><circle cx="661.40" cy="522.30" r="2" fill="#d95319"/><circle cx="703.00" cy="522.30" r="2" fill="#d95319"/><circle cx="744.60" cy="522.30" r="2" fill="#d95319"/><circle cx="786.20" cy="522.30" r="2" fill="#d95319"/><circle cx="827.80" cy="653.50" r="2" fill="#d95319"/><path d="M121.5 506.5v3M121.5 670.5v-3 M162.5 506.5v3M162.5 670.5v-3 M204.5 506.5v5.8M204.5 670.5v-5.8 M245.5 506.5v3M245.5 670.5v-3 M287.5 506.5v3M287.5 670.5v-3 M329.5 506.5v5.8M329.5 670.5v-5.8 M370.5 506.5v3M370.5 670.5v-3 M412.5 506.5v3M412.5 670.5v-3 M453.5 506.5v5.8M453.5 670.5v-5.8 M495.5 506.5v3M495.5 670.5v-3 M537.5 506.5v3M537.5 670.5v-3 M578.5 506.5v5.8M578.5 670.5v-5.8 M620.5 506.5v3M620.5 670.5v-3 M661.5 506.5v3M661.5 670.5v-3 M703.5 506.5v5.8M703.5 670.5v-5.8 M745.5 506.5v3M745.5 670.5v-3 M786.5 506.5v3M786.5 670.5v-3 M828.5 506.5v5.8M828.5 670.5v-5.8 M869.5 506.5v3M869.5 670.5v-3 M79.5 654.5h5.7M911.5 654.5h-5.7 M79.5 621.5h3.2M911.5 621.5h-3.2 M79.5 588.5h5.7M911.5 588.5h-5.7 M79.5 555.5h3.2M911.5 555.5h-3.2 M79.5 522.5h5.7M911.5 522.5h-5.7" stroke="#111" stroke-width="1" fill="none"/><rect x="79.5" y="506.5" width="832.0" height="164.0" fill="none" stroke="#111" stroke-width="1.15"/></svg>
<div class="abs gl" style="left:0;top:0;width:1276px;height:750px">
<div class="t" style="left:68.58px;top:673px;font-size:13.33px;line-height:19px;color:#262626;">225</div>
<div class="t" style="left:193.58px;top:673px;font-size:13.33px;line-height:19px;color:#262626;">228</div>
<div class="t" style="left:318.58px;top:673px;font-size:13.33px;line-height:19px;color:#262626;">231</div>
<div class="t" style="left:442.58px;top:673px;font-size:13.33px;line-height:19px;color:#262626;">234</div>
<div class="t" style="left:567.58px;top:673px;font-size:13.33px;line-height:19px;color:#262626;">237</div>
<div class="t" style="left:692.58px;top:673px;font-size:13.33px;line-height:19px;color:#262626;">240</div>
<div class="t" style="left:817.58px;top:673px;font-size:13.33px;line-height:19px;color:#262626;">243</div>
<div class="t" style="left:67.09px;top:512px;font-size:13.33px;line-height:19px;color:#262626;">2</div>
<div class="t" style="left:67.09px;top:578px;font-size:13.33px;line-height:19px;color:#262626;">0</div>
<div class="t" style="left:62.65px;top:644px;font-size:13.33px;line-height:19px;color:#262626;">-2</div>
<div class="t" style="left:430.30px;top:690px;font-size:15px;line-height:21px;color:#2e2e2e;transform:scaleX(0.9937);transform-origin:0 0;">Data Change Event</div>
<div class="t" style="left:40.2px;top:607.4px;font-size:15px;line-height:16px;color:#2e2e2e;transform:rotate(-90deg);transform-origin:0 0;">Value</div>
</div>
<div class="abs" style="left:92px;top:531px;width:159px;height:60px;background:#fff;border:1px solid #111;"></div>
<svg style="left:0;top:0" width="1276" height="750" viewBox="0 0 1276 750" fill="none" stroke-width="1.1">
<path d="M97.6 548.6H108.6V542.3H119.5" stroke="#0072bd"/><circle cx="114" cy="542.1" r="1.9" fill="#0072bd"/>
<path d="M97.6 566.6H108.6V560.3H119.5" stroke="#d95319"/><circle cx="114" cy="560.1" r="1.9" fill="#d95319"/>
<path d="M97.6 584.4H108.6V578.1H119.5" stroke="#fbe6bf"/><circle cx="114" cy="577.9" r="1.9" fill="#fbe1b0"/>
</svg>
<div class="abs gl" style="left:0;top:0;width:1276px;height:750px">
<div class="t" style="left:121.60px;top:533px;font-size:13.33px;line-height:19px;color:#1a1a1a;transform:scaleX(0.9728);transform-origin:0 0;">Sinusoid(ns = 3:1005)</div>
<div class="t" style="left:121.60px;top:551px;font-size:13.33px;line-height:19px;color:#1a1a1a;transform:scaleX(0.9731);transform-origin:0 0;">Square(ns = 3:1006)</div>
<div class="t" style="left:121.60px;top:569px;font-size:13.33px;line-height:19px;color:#d4d4d4;transform:scaleX(0.9718);transform-origin:0 0;">Triangle(ns = 3:1007)</div>
</div>
<div class="abs" style="left:0px;top:142px;width:943px;height:2px;background:#737b7b;"></div>
<div class="abs" style="left:943px;top:142px;width:333px;height:1px;background:#9a9a9a;"></div>
<div class="redbox" style="left:264.2px;top:53.2px;width:198.7px;height:62.7px"></div>
<div class="redbox" style="left:326px;top:143.9px;width:618.3px;height:148.99999999999997px"></div>
<div class="redbox" style="left:15.3px;top:417.2px;width:355.5px;height:47.0px"></div>
<div class="redbox" style="left:82.4px;top:522.7px;width:176.70000000000002px;height:74.29999999999995px"></div>
</div>
</body>
</html>
